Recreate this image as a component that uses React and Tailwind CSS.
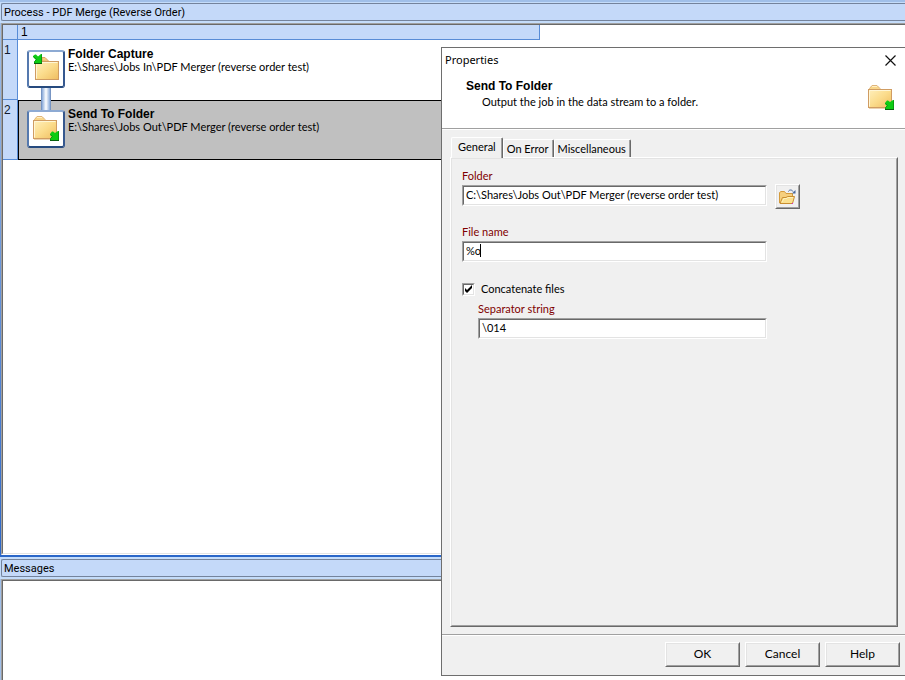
import React, { useState } from 'react';

const RAISED = 'border border-t-white border-l-white border-r-[#696969] border-b-[#696969]';
const RAISED_INNER = 'border border-t-[#e3e3e3] border-l-[#e3e3e3] border-r-[#a0a0a0] border-b-[#a0a0a0]';
const SUNKEN = 'border border-t-[#a0a0a0] border-l-[#a0a0a0] border-r-white border-b-white';
const SUNKEN_INNER = 'border border-t-[#696969] border-l-[#696969] border-r-[#e3e3e3] border-b-[#e3e3e3]';

function FolderGradient({ id }) {
  return (
    <linearGradient id={id} x1="0" y1="0" x2="1" y2="1">
      <stop offset="0" stopColor="#fff0bd" />
      <stop offset="0.5" stopColor="#fbdc8c" />
      <stop offset="1" stopColor="#efbd60" />
    </linearGradient>
  );
}

function FolderOutIcon({ id }) {
  return (
    <svg width="26" height="26" viewBox="0 0 26 26" aria-hidden="true">
      <defs><FolderGradient id={id} /></defs>
      <path d="M1.5 5.5V3.5L4 .5H9L12 3.5V5.5Z" fill="#f9d68a" stroke="#dfb47a" />
      <path d="M4 1.5H9" stroke="#fff0c4" />
      <rect x=".5" y="4.5" width="23" height="18" fill={`url(#${id})`} stroke="#d09c62" />
      <path d="M1.5 21.5V5.5H22.5" fill="none" stroke="#fff6d5" />
      <path d="M1 23.5H24" stroke="#ead3b0" />
      <path d="M26 15V25H17V23L19 21L17 19V18L19 15.5H20L22 17L25 15Z" fill="#0dcc12" />
      <path d="M25.5 15.5V24.5H17.5V22.5L19.5 20.5L17.5 18.5" fill="none" stroke="#0a9a10" />
      <path d="M17 24.5H26" stroke="#07600c" />
    </svg>
  );
}

function FolderInIcon({ id }) {
  return (
    <svg width="26" height="30" viewBox="0 0 26 30" aria-hidden="true">
      <defs><FolderGradient id={id} /></defs>
      <path d="M9 7V3.5H12L16 7.5Z" fill="#f7cc82" stroke="#dca562" />
      <rect x="2.5" y="7.5" width="23" height="18" fill={`url(#${id})`} stroke="#d09c62" />
      <path d="M3.5 24.5V8.5H24.5" fill="none" stroke="#fff6d5" />
      <path d="M9 0V10H1V8L3 6L0 3V2L2 .5H3L5 2.5L8 0Z" fill="#0dcc12" />
      <path d="M8.5 .5V9.5H1.5V7.5L3.5 5.5L.5 2.5" fill="none" stroke="#0a9a10" />
      <path d="M1 9.5H9" stroke="#07600c" />
    </svg>
  );
}

function BrowseIcon() {
  return (
    <svg width="18" height="16" viewBox="0 0 18 16" aria-hidden="true">
      <path d="M.5 14V3.5L2 2.5H5.5L7 4.5H13.5V7" fill="#f6cf7d" stroke="#d49a3c" />
      <path d="M1 14.5L3.5 8.5H7L8.5 7.5H15.5L13.5 14.5Z" fill="#fbe08f" stroke="#c98e31" />
      <path d="M3 13L5 9.5H8L9 8.5H14" fill="none" stroke="#fff2bd" />
      <path d="M9.5 2.5C10 .5 13 .5 14 2.5" fill="none" stroke="#46679a" />
      <path d="M13 4.5H16.5V1Z" fill="#46679a" />
      <rect x="13" y="14" width="1" height="1" fill="#e020d0" />
    </svg>
  );
}

function PaneTitle({ children }) {
  return (
    <h2 className="ml-px h-[18px] rounded-l-xs border border-r-0 border-[#74839c] bg-[#c4d9f9] pl-[2px] font-['Roboto'] text-[11px] leading-[17px]">
      {children}
    </h2>
  );
}

function ProcessStep({ number, title, path, selected, children }) {
  return (
    <div className="flex h-[60px]">
      <div className="w-[15px] shrink-0 border-r border-b border-[#588cd6] bg-[#c4d9f9] pt-[2px] pl-px text-[12px] leading-4 text-[#111a2c]">
        {number}
      </div>
      <div className={`flex w-[522px] shrink-0 border pl-2 ${selected ? 'border-black bg-[#c0c0c0]' : 'border-transparent'}`}>
        <div className="flex w-[38px] flex-col items-center pt-[9px]">
          <div className="relative z-10 flex h-[38px] w-[38px] shrink-0 items-center justify-center rounded-[3px] border-2 border-t-[#8daad3] border-r-[#36588f] border-b-[#264a7e] border-l-[#5579ae] bg-white">
            {children}
          </div>
          {!selected && (
            <div className="relative z-10 h-[23px] w-[10px] shrink-0 border-x border-[#7795c3] bg-linear-to-r from-[#88a9d9] via-white to-[#88a9d9]"></div>
          )}
        </div>
        <div className="pt-[6px] pl-[3px]">
          <div className="text-[12px] leading-[14px] font-bold">{title}</div>
          <div className="font-['Lato'] text-[11px] leading-3">{path}</div>
        </div>
      </div>
    </div>
  );
}

function TextField({ id, label, value, onChange, caret }) {
  return (
    <div className="min-w-0 flex-1">
      <label htmlFor={id} className="block text-[11px] leading-4 text-[#800000]">{label}</label>
      <div className={`relative mt-px ${SUNKEN}`}>
        <input
          id={id}
          type="text"
          value={value}
          onChange={(e) => onChange(e.target.value)}
          className={`block h-[19px] w-full bg-white px-[2px] pb-[3px] text-[11px] leading-[14px] outline-none ${SUNKEN_INNER}`}
        />
        {caret && <span className="absolute top-[2px] left-[17px] h-[13px] w-px bg-black"></span>}
      </div>
    </div>
  );
}

function DialogButton({ children }) {
  return (
    <button type="button" className={`w-[75px] text-[12px] ${RAISED}`}>
      <span className={`block h-[23px] leading-5 ${RAISED_INNER}`}>{children}</span>
    </button>
  );
}

function Tab({ children, active, onClick }) {
  return (
    <button
      type="button"
      role="tab"
      aria-selected={active}
      onClick={onClick}
      className={`rounded-t-[2px] border-t border-l border-white border-r border-r-[#696969] text-[11px] ${active ? 'relative z-10 -mb-px h-[21px] bg-[#f0f0f0]' : 'h-[18px]'}`}
    >
      <span className={`block h-full border-r border-[#a0a0a0] leading-[18px] ${active ? 'pr-[5px] pl-[6px]' : 'px-[3px]'}`}>{children}</span>
    </button>
  );
}

function PropertiesDialog() {
  const [tab, setTab] = useState('General');
  const [folder, setFolder] = useState('C:\\Shares\\Jobs Out\\PDF Merger (reverse order test)');
  const [fileName, setFileName] = useState('%o');
  const [concatenate, setConcatenate] = useState(true);
  const [separator, setSeparator] = useState('\\014');

  return (
    <div role="dialog" aria-labelledby="dialog-title" className="absolute top-[47px] right-0 bottom-1 left-[441px] z-20 flex flex-col border border-r-0 border-[#6e6e6e] bg-[#f0f0f0] font-['Lato']">
      <header className="border-b border-[#a0a0a0] bg-white pb-[17px]">
        <div className="flex items-center justify-between pt-1 pr-2 pl-[3px]">
          <h1 id="dialog-title" className="font-['Noto_Sans'] text-[11px] leading-4">Properties</h1>
          <button type="button" aria-label="Close" className="p-px">
            <svg width="11" height="11" viewBox="0 0 11 11" aria-hidden="true">
              <path d="M.5 .5L10.5 10.5M10.5 .5L.5 10.5" stroke="#111" strokeWidth="1.2" />
            </svg>
          </button>
        </div>
        <div className="flex justify-between pt-[10px] pr-[11px] pl-6">
          <div>
            <div className="font-['Liberation_Sans'] text-[12px] leading-4 font-bold">Send To Folder</div>
            <div className="pl-4 text-[11px] leading-4">Output the job in the data stream to a folder.</div>
          </div>
          <div className="pt-[7px]"><FolderOutIcon id="dialog-folder" /></div>
        </div>
      </header>

      <div className="flex flex-1 flex-col border-t border-white pt-[7px] pr-[7px] pb-[7px] pl-2">
        <div role="tablist" className="flex items-end pl-px">
          {['General', 'On Error', 'Miscellaneous'].map((name) => (
            <Tab key={name} active={tab === name} onClick={() => setTab(name)}>{name}</Tab>
          ))}
        </div>
        <div className={`flex flex-1 ${RAISED}`}>
          <div className={`flex-1 pt-[9px] pr-[96px] pl-[10px] ${RAISED_INNER}`}>
            <div className="flex items-end gap-2">
              <TextField id="folder" label="Folder" value={folder} onChange={setFolder} />
              {/* Browse button is taller than the field and hangs below it */}
              <button type="button" aria-label="Browse" className={`-mb-[3px] shrink-0 ${RAISED}`}>
                <span className={`flex h-[23px] w-[23px] items-center justify-center ${RAISED_INNER}`}><BrowseIcon /></span>
              </button>
            </div>
            <div className="flex pt-[18px] pr-[33px]">
              <TextField id="file-name" label="File name" value={fileName} onChange={setFileName} caret />
            </div>
            <label className="mt-[19px] flex items-center gap-[6px] text-[11px] leading-4">
              <span className={`grid ${SUNKEN}`}>
                <input
                  type="checkbox"
                  checked={concatenate}
                  onChange={(e) => setConcatenate(e.target.checked)}
                  className={`peer col-start-1 row-start-1 h-[11px] w-[11px] appearance-none bg-white ${SUNKEN_INNER}`}
                />
                <svg width="11" height="11" viewBox="0 0 11 11" className="pointer-events-none invisible col-start-1 row-start-1 peer-checked:visible" aria-hidden="true">
                  <path d="M2 4V7L4 9L9 4V1L4 6Z" fill="#000" />
                </svg>
              </span>
              Concatenate files
            </label>
            <div className="flex pt-1 pr-[33px] pl-4">
              <TextField id="separator" label="Separator string" value={separator} onChange={setSeparator} />
            </div>
          </div>
        </div>
      </div>

      <footer className="border-t border-[#a0a0a0]">
        <div className="flex justify-end gap-[5px] border-t border-white pt-[6px] pr-[5px] pb-2">
          <DialogButton>OK</DialogButton>
          <DialogButton>Cancel</DialogButton>
          <DialogButton>Help</DialogButton>
        </div>
      </footer>
    </div>
  );
}

export default function App() {
  return (
    <div className="relative flex min-h-screen flex-col overflow-hidden bg-[#c4dcfa] font-['Liberation_Sans',sans-serif] text-black">
      <div className="h-[3px] border-b border-[#c4dcfa] bg-[#a0bfe9]"></div>
      <section className="flex flex-1 flex-col border-b-2 border-[#2a66c8]">
        <PaneTitle>Process - PDF Merge (Reverse Order)</PaneTitle>
        <div className="mt-[2px] flex flex-1 bg-linear-to-b from-[#a0bfe9] to-[#2a66c8] pl-px">
          <div className="flex flex-1 border-t border-b border-l border-t-[#a0a0a0] border-b-white border-l-[#a0a0a0]">
            <div className="flex-1 border-t border-b border-l border-t-[#696969] border-b-[#e3e3e3] border-l-[#696969] bg-white">
              <div className="flex h-[15px] w-[537px] border-r border-b border-[#588cd6] bg-[#c4d9f9] text-[12px] leading-[14px]">
                <div className="w-[15px] border-r border-[#588cd6]"></div>
                <div className="pl-[3px]">1</div>
              </div>
              <ProcessStep number="1" title="Folder Capture" path="E:\Shares\Jobs In\PDF Merger (reverse order test)">
                <FolderInIcon id="capture-folder" />
              </ProcessStep>
              <ProcessStep number="2" title="Send To Folder" path="E:\Shares\Jobs Out\PDF Merger (reverse order test)" selected>
                <FolderOutIcon id="send-folder" />
              </ProcessStep>
            </div>
          </div>
        </div>
      </section>
      <section className="pt-[2px]">
        <PaneTitle>Messages</PaneTitle>
        <div className="mt-[2px] bg-[#a0bfe9] pl-px">
          <div className="border-t border-l border-[#a0a0a0]">
            <div className="h-[100px] border-t border-l border-[#696969] bg-white"></div>
          </div>
        </div>
      </section>
      <PropertiesDialog />
    </div>
  );
}
